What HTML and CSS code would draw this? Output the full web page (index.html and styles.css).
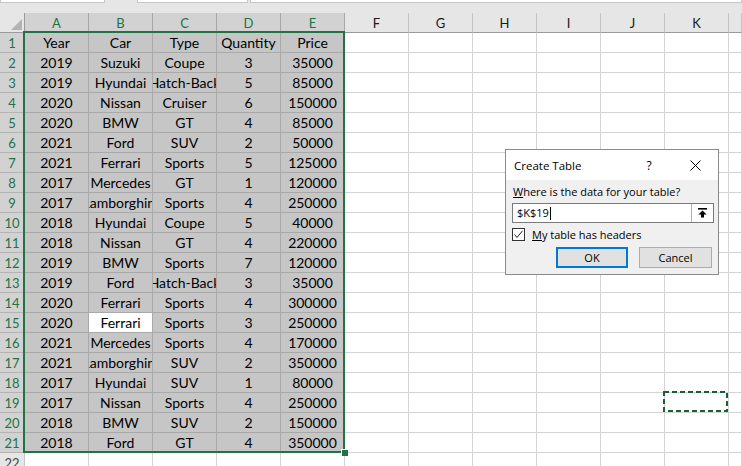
FILE: index.html
```html
<!DOCTYPE html>
<html lang="en">
<head>
<meta charset="utf-8">
<title>Create Table</title>
<link rel="stylesheet" href="styles.css">
</head>
<body>
<div class="app">
  <div class="topbar"><div class="box b1"></div><div class="box b2"></div><div class="box b3"></div></div>
  <div class="sheet">
    <div class="corner"><span class="tri"></span></div>
    <div class="ch cs">A</div><div class="ch cs">B</div><div class="ch cs">C</div><div class="ch cs">D</div><div class="ch cs">E</div>
    <div class="ch">F</div><div class="ch">G</div><div class="ch">H</div><div class="ch">I</div><div class="ch">J</div><div class="ch">K</div><div class="ch"></div>

    <div class="rh">1</div><div class="s">Year</div><div class="s">Car</div><div class="s">Type</div><div class="s">Quantity</div><div class="s">Price</div><div></div><div></div><div></div><div></div><div></div><div></div><div></div>
    <div class="rh">2</div><div class="s">2019</div><div class="s">Suzuki</div><div class="s">Coupe</div><div class="s">3</div><div class="s">35000</div><div></div><div></div><div></div><div></div><div></div><div></div><div></div>
    <div class="rh">3</div><div class="s">2019</div><div class="s">Hyundai</div><div class="s">Hatch-Back</div><div class="s">5</div><div class="s">85000</div><div></div><div></div><div></div><div></div><div></div><div></div><div></div>
    <div class="rh">4</div><div class="s">2020</div><div class="s">Nissan</div><div class="s">Cruiser</div><div class="s">6</div><div class="s">150000</div><div></div><div></div><div></div><div></div><div></div><div></div><div></div>
    <div class="rh">5</div><div class="s">2020</div><div class="s">BMW</div><div class="s">GT</div><div class="s">4</div><div class="s">85000</div><div></div><div></div><div></div><div></div><div></div><div></div><div></div>
    <div class="rh">6</div><div class="s">2021</div><div class="s">Ford</div><div class="s">SUV</div><div class="s">2</div><div class="s">50000</div><div></div><div></div><div></div><div></div><div></div><div></div><div></div>
    <div class="rh">7</div><div class="s">2021</div><div class="s">Ferrari</div><div class="s">Sports</div><div class="s">5</div><div class="s">125000</div><div></div><div></div><div></div><div></div><div></div><div></div><div></div>
    <div class="rh">8</div><div class="s">2017</div><div class="s">Mercedes</div><div class="s">GT</div><div class="s">1</div><div class="s">120000</div><div></div><div></div><div></div><div></div><div></div><div></div><div></div>
    <div class="rh">9</div><div class="s">2017</div><div class="s">Lamborghini</div><div class="s">Sports</div><div class="s">4</div><div class="s">250000</div><div></div><div></div><div></div><div></div><div></div><div></div><div></div>
    <div class="rh">10</div><div class="s">2018</div><div class="s">Hyundai</div><div class="s">Coupe</div><div class="s">5</div><div class="s">40000</div><div></div><div></div><div></div><div></div><div></div><div></div><div></div>
    <div class="rh">11</div><div class="s">2018</div><div class="s">Nissan</div><div class="s">GT</div><div class="s">4</div><div class="s">220000</div><div></div><div></div><div></div><div></div><div></div><div></div><div></div>
    <div class="rh">12</div><div class="s">2019</div><div class="s">BMW</div><div class="s">Sports</div><div class="s">7</div><div class="s">120000</div><div></div><div></div><div></div><div></div><div></div><div></div><div></div>
    <div class="rh">13</div><div class="s">2019</div><div class="s">Ford</div><div class="s">Hatch-Back</div><div class="s">3</div><div class="s">35000</div><div></div><div></div><div></div><div></div><div></div><div></div><div></div>
    <div class="rh">14</div><div class="s">2020</div><div class="s">Ferrari</div><div class="s">Sports</div><div class="s">4</div><div class="s">300000</div><div></div><div></div><div></div><div></div><div></div><div></div><div></div>
    <div class="rh">15</div><div class="s">2020</div><div class="s active">Ferrari</div><div class="s">Sports</div><div class="s">3</div><div class="s">250000</div><div></div><div></div><div></div><div></div><div></div><div></div><div></div>
    <div class="rh">16</div><div class="s">2021</div><div class="s">Mercedes</div><div class="s">Sports</div><div class="s">4</div><div class="s">170000</div><div></div><div></div><div></div><div></div><div></div><div></div><div></div>
    <div class="rh">17</div><div class="s">2021</div><div class="s">Lamborghini</div><div class="s">SUV</div><div class="s">2</div><div class="s">350000</div><div></div><div></div><div></div><div></div><div></div><div></div><div></div>
    <div class="rh">18</div><div class="s">2017</div><div class="s">Hyundai</div><div class="s">SUV</div><div class="s">1</div><div class="s">80000</div><div></div><div></div><div></div><div></div><div></div><div></div><div></div>
    <div class="rh">19</div><div class="s">2017</div><div class="s">Nissan</div><div class="s">Sports</div><div class="s">4</div><div class="s">250000</div><div></div><div></div><div></div><div></div><div></div><div></div><div></div>
    <div class="rh">20</div><div class="s">2018</div><div class="s">BMW</div><div class="s">SUV</div><div class="s">2</div><div class="s">150000</div><div></div><div></div><div></div><div></div><div></div><div></div><div></div>
    <div class="rh">21</div><div class="s">2018</div><div class="s">Ford</div><div class="s">GT</div><div class="s">4</div><div class="s">350000</div><div></div><div></div><div></div><div></div><div></div><div></div><div></div>
    <div class="rh un">22</div><div></div><div></div><div></div><div></div><div></div><div></div><div></div><div></div><div></div><div></div><div></div><div></div>
  </div>

  <div class="selection"><span class="handle"></span></div>

  <svg class="ants" width="66" height="22" viewBox="0 0 66 22"><rect x="1" y="1" width="63" height="19" fill="none" stroke="#1a5e38" stroke-width="2" stroke-dasharray="5 3"/></svg>

  <div class="dialog">
    <div class="dtitle">
      <span class="dt">Create Table</span>
      <span class="tbtn">?</span>
      <span class="tbtn"><svg width="11" height="11" viewBox="0 0 11 11"><path d="M0.5 0.5L10.5 10.5M10.5 0.5L0.5 10.5" stroke="#000" stroke-width="1" fill="none"/></svg></span>
    </div>
    <div class="dbody">
      <div class="lbl"><u>W</u>here is the data for your table?</div>
      <div class="field">
        <span class="val">$K$19</span><span class="caret"></span>
        <span class="rbtn"><svg width="9" height="10" viewBox="0 0 9 10"><rect x="0" y="0" width="9" height="1.6" fill="#000"/><polygon points="4.5,2.4 8.6,6.4 6,6.4 6,9.6 3,9.6 3,6.4 0.4,6.4" fill="#000"/></svg></span>
      </div>
      <div class="chk">
        <span class="cbox"><svg width="11" height="11" viewBox="0 0 11 11"><polyline points="1.5,5.5 4,8.5 9.5,1.8" fill="none" stroke="#222" stroke-width="1"/></svg></span>
        <span class="ctext"><u>M</u>y table has headers</span>
      </div>
      <div class="btns">
        <span class="btn ok">OK</span>
        <span class="btn">Cancel</span>
      </div>
    </div>
  </div>
</div>
</body>
</html>
```

FILE: styles.css
```css
* { box-sizing: border-box; }
html, body { margin: 0; padding: 0; background: #fff; }
body { overflow: hidden; }

.app {
  position: relative;
  width: 742px;
  height: 466px;
  overflow: hidden;
  font-family: Lato, "Liberation Sans", sans-serif;
}

.topbar {
  display: flex;
  height: 13px;
  background: #e6e6e6;
}
.topbar .box {
  height: 3px;
  background: #fff;
  border: 1px solid #c6c6c6;
  border-top: 0;
}
.topbar .b1 { width: 105px; }
.topbar .b2 { width: 111px; margin-left: 32px; }
.topbar .b3 { flex: 1; margin-left: 2px; }

.sheet {
  display: grid;
  grid-template-columns: 25px repeat(11, 64px) 13px;
  grid-auto-rows: 20px;
}
.sheet > div {
  display: flex;
  align-items: center;
  justify-content: center;
  overflow: hidden;
  white-space: nowrap;
  border-right: 1px solid #d4d4d4;
  border-bottom: 1px solid #d4d4d4;
  font-size: 14px;
  color: #000;
}

.sheet > .corner {
  background: #e6e6e6;
  border-right-color: #9b9b9b;
  border-bottom-color: #9b9b9b;
  align-items: flex-end;
  justify-content: flex-end;
  padding: 0 2px 2px 0;
}
.corner .tri {
  width: 11px;
  height: 11px;
  background: #b4b4b4;
  clip-path: polygon(100% 0, 100% 100%, 0 100%);
}

.sheet > .ch {
  background: #e6e6e6;
  border-right-color: #c4c4c4;
  border-bottom-color: #9b9b9b;
  font-size: 13px;
  color: #1a1a1a;
}
.sheet > .ch.cs {
  background: #d2d2d2;
  border-right-color: #a8a8a8;
  color: #217346;
}

.sheet > .rh {
  background: #d2d2d2;
  border-right-color: #9b9b9b;
  border-bottom-color: #b4b4b4;
  font-size: 13px;
  color: #217346;
}
.sheet > .rh.un {
  background: #e6e6e6;
  color: #444;
  border-right-color: #c4c4c4;
}

.sheet > .s {
  background: #c6c6c6;
  border-right-color: #a9a9a9;
  border-bottom-color: #a9a9a9;
}
.sheet > .s.active { background: #fff; }

.selection {
  position: absolute;
  left: 23px;
  top: 31px;
  width: 322px;
  height: 422px;
  border: 2px solid #217346;
}
.selection .handle {
  position: absolute;
  right: -5px;
  bottom: -5px;
  width: 7px;
  height: 7px;
  background: #217346;
  border-left: 1px solid #fff;
  border-top: 1px solid #fff;
}

.ants {
  position: absolute;
  left: 663px;
  top: 391px;
}

.dialog {
  position: absolute;
  left: 505px;
  top: 149px;
  width: 214px;
  height: 126px;
  border: 1px solid #8a8a8a;
  background: #f0f0f0;
  font-family: "Open Sans", "Noto Sans", sans-serif;
  font-size: 11px;
  color: #000;
  display: flex;
  flex-direction: column;
}
.dtitle {
  height: 30px;
  background: #fff;
  display: flex;
  align-items: center;
  padding-left: 8px;
}
.dt { flex: 1; font-size: 11.5px; }
.tbtn {
  width: 46px;
  height: 30px;
  display: flex;
  align-items: center;
  justify-content: center;
  font-size: 12px;
}
.dbody {
  padding: 4px 4px 0 6px;
  display: flex;
  flex-direction: column;
}
.lbl {
  height: 16px;
  line-height: 16px;
  padding-left: 1px;
}
.field {
  margin-top: 3px;
  height: 20px;
  background: #fff;
  border: 1px solid #7a7a7a;
  display: flex;
  align-items: center;
  padding-left: 4px;
}
.val { line-height: 14px; }
.caret {
  width: 1px;
  height: 13px;
  background: #000;
  margin-left: 1px;
}
.rbtn {
  margin-left: auto;
  width: 22px;
  height: 18px;
  border-left: 1px solid #b0b0b0;
  display: flex;
  align-items: center;
  justify-content: center;
}
.chk {
  margin-top: 5px;
  height: 13px;
  display: flex;
  align-items: center;
}
.cbox {
  width: 13px;
  height: 13px;
  border: 1px solid #333;
  background: #fff;
  display: flex;
  align-items: center;
  justify-content: center;
}
.ctext { margin-left: 7px; line-height: 14px; }
.btns {
  margin-top: 6px;
  display: flex;
  justify-content: flex-end;
  gap: 11px;
  padding-right: 2px;
}
.btn {
  width: 73px;
  height: 21px;
  background: #e1e1e1;
  border: 1px solid #adadad;
  display: flex;
  align-items: center;
  justify-content: center;
}
.btn.ok {
  width: 72px;
  border: 2px solid #0078d7;
}
```
